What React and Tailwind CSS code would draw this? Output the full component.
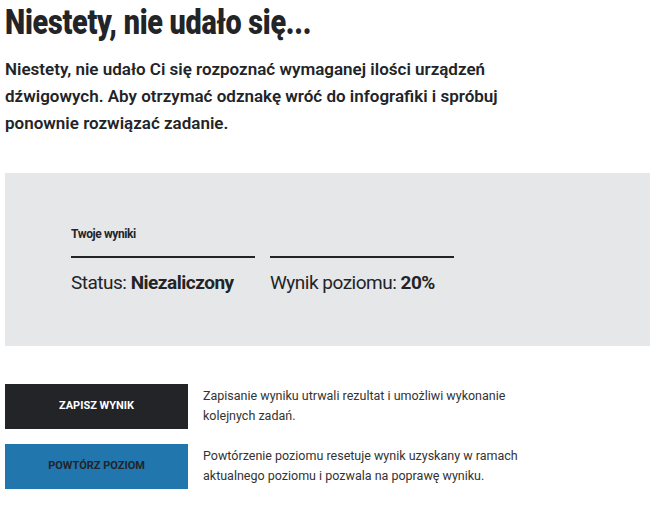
export default function App() {
  return (
    <div className="min-h-[529px] w-[654px] bg-white px-[5px] text-[#222428]" style={{ fontFamily: "Roboto, 'Liberation Sans', sans-serif" }}>
      <h1 className="h-[48px] origin-left scale-x-[0.82] whitespace-nowrap text-[35px] font-black leading-[46px] tracking-[-0.3px]">
        Niestety, nie udało się...
      </h1>
      <p className="mt-[8px] w-[500px] text-[17px] font-semibold leading-[27px]">
        Niestety, nie udało Ci się rozpoznać wymaganej ilości urządzeń dźwigowych. Aby otrzymać odznakę wróć do infografiki i spróbuj ponownie rozwiązać zadanie.
      </p>

      <section className="mt-[36px] h-[173px] w-[645px] bg-[#e6e7e9] pl-[66px] pt-[54px]">
        <div className="text-[12px] font-bold leading-[14px] tracking-[-0.4px]">Twoje wyniki</div>
        <div className="mt-[15px] flex gap-[15px]">
          <div className="w-[184px]">
            <div className="h-[2px] bg-[#222428]" />
            <div className="mt-[13px] whitespace-nowrap text-[19px] leading-[24px] tracking-[-0.5px]">
              Status: <span className="font-bold">Niezaliczony</span>
            </div>
          </div>
          <div className="w-[184px]">
            <div className="h-[2px] bg-[#222428]" />
            <div className="mt-[13px] whitespace-nowrap text-[19px] leading-[24px] tracking-[-0.5px]">
              Wynik poziomu: <span className="font-bold">20%</span>
            </div>
          </div>
        </div>
      </section>

      <div className="mt-[38px] flex flex-col gap-[15px]">
        <div className="flex items-start gap-[15px]">
          <button className="flex h-[45px] w-[183px] items-center justify-center bg-[#222428] text-[11px] font-bold text-white">
            ZAPISZ WYNIK
          </button>
          <p className="mt-[2px] w-[330px] text-[12.5px] leading-[20px] text-[#333]">
            Zapisanie wyniku utrwali rezultat i umożliwi wykonanie kolejnych zadań.
          </p>
        </div>
        <div className="flex items-start gap-[15px]">
          <button className="flex h-[45px] w-[183px] items-center justify-center bg-[#2176ae] text-[11px] font-bold text-[#222428]">
            POWTÓRZ POZIOM
          </button>
          <p className="mt-[2px] w-[330px] text-[12.5px] leading-[20px] text-[#333]">
            Powtórzenie poziomu resetuje wynik uzyskany w ramach aktualnego poziomu i pozwala na poprawę wyniku.
          </p>
        </div>
      </div>
    </div>
  );
}
